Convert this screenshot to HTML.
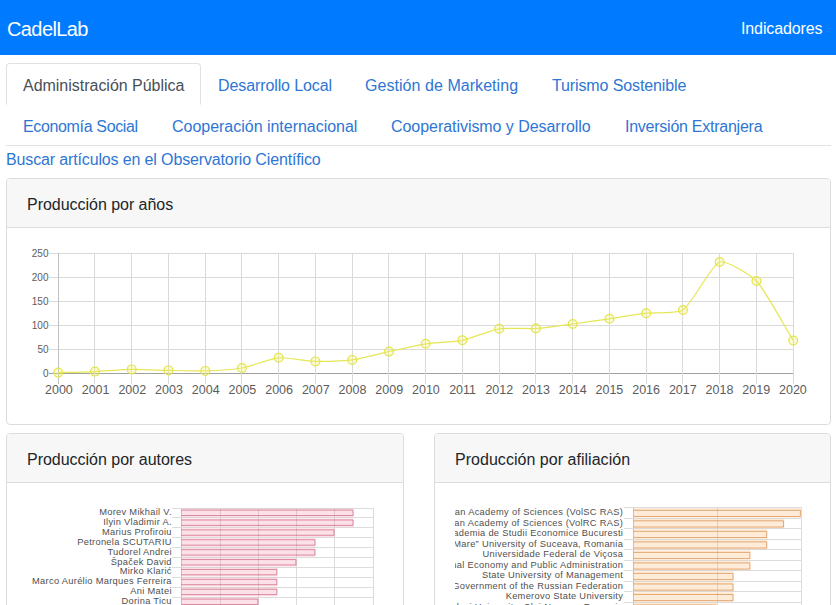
<!DOCTYPE html>
<html lang="es"><head><meta charset="utf-8"><title>CadelLab</title>
<style>
html,body{margin:0;padding:0;background:#fff;}
body{width:836px;height:605px;overflow:hidden;position:relative;font-family:"Liberation Sans", sans-serif;}
.card{position:absolute;border:1px solid #dcdcdc;border-radius:4px;background:#fff;box-sizing:border-box;overflow:hidden}
.card-header{position:absolute;left:0;top:0;right:0;height:48px;background:#f7f7f7;border-bottom:1px solid #dcdcdc}
</style></head><body>
<nav style="position:absolute;left:0;top:0;width:836px;height:55px;background:#007bff"></nav>
<a style="position:absolute;display:block;left:7px;top:15px;font-size:20px;line-height:28px;color:#fff;letter-spacing:-0.6px;white-space:nowrap;text-decoration:none;margin:0;font-weight:normal;">CadelLab</a>
<a style="position:absolute;display:block;left:741px;top:17px;font-size:16px;line-height:24px;color:#fff;letter-spacing:-0.12px;white-space:nowrap;text-decoration:none;margin:0;font-weight:normal;">Indicadores</a>
<div style="position:absolute;left:6px;top:63px;width:195px;height:42px;box-sizing:border-box;border:1px solid #dee2e6;border-bottom-color:#fff;border-radius:4px 4px 0 0"></div>
<div style="position:absolute;left:6px;top:145px;width:825px;height:1px;background:#dee2e6"></div>
<a style="position:absolute;display:block;left:23px;top:74px;font-size:16px;line-height:24px;color:#495057;letter-spacing:-0.02px;white-space:nowrap;text-decoration:none;margin:0;font-weight:normal;">Administración Pública</a>
<a style="position:absolute;display:block;left:218px;top:74px;font-size:16px;line-height:24px;color:#2e76d4;letter-spacing:-0.1px;white-space:nowrap;text-decoration:none;margin:0;font-weight:normal;">Desarrollo Local</a>
<a style="position:absolute;display:block;left:365px;top:74px;font-size:16px;line-height:24px;color:#2e76d4;letter-spacing:0.05px;white-space:nowrap;text-decoration:none;margin:0;font-weight:normal;">Gestión de Marketing</a>
<a style="position:absolute;display:block;left:552px;top:74px;font-size:16px;line-height:24px;color:#2e76d4;letter-spacing:-0.12px;white-space:nowrap;text-decoration:none;margin:0;font-weight:normal;">Turismo Sostenible</a>
<a style="position:absolute;display:block;left:23px;top:115px;font-size:16px;line-height:24px;color:#2e76d4;letter-spacing:-0.35px;white-space:nowrap;text-decoration:none;margin:0;font-weight:normal;">Economía Social</a>
<a style="position:absolute;display:block;left:172px;top:115px;font-size:16px;line-height:24px;color:#2e76d4;letter-spacing:-0.02px;white-space:nowrap;text-decoration:none;margin:0;font-weight:normal;">Cooperación internacional</a>
<a style="position:absolute;display:block;left:391px;top:115px;font-size:16px;line-height:24px;color:#2e76d4;letter-spacing:-0.05px;white-space:nowrap;text-decoration:none;margin:0;font-weight:normal;">Cooperativismo y Desarrollo</a>
<a style="position:absolute;display:block;left:625px;top:115px;font-size:16px;line-height:24px;color:#2e76d4;letter-spacing:-0.25px;white-space:nowrap;text-decoration:none;margin:0;font-weight:normal;">Inversión Extranjera</a>
<a style="position:absolute;display:block;left:6px;top:148px;font-size:16px;line-height:24px;color:#2e76d4;letter-spacing:-0.14px;white-space:nowrap;text-decoration:none;margin:0;font-weight:normal;">Buscar artículos en el Observatorio Científico</a>
<div class="card" style="left:6px;top:178px;width:825px;height:247px"><div class="card-header"></div></div>
<div class="card" style="left:6px;top:433px;width:398px;height:200px"><div class="card-header"></div></div>
<div class="card" style="left:434px;top:433px;width:397px;height:200px"><div class="card-header"></div></div>
<h5 style="position:absolute;display:block;left:27px;top:193px;font-size:16px;line-height:24px;color:#212529;letter-spacing:-0.03px;white-space:nowrap;text-decoration:none;margin:0;font-weight:normal;">Producción por años</h5>
<h5 style="position:absolute;display:block;left:27px;top:448px;font-size:16px;line-height:24px;color:#212529;letter-spacing:-0.02px;white-space:nowrap;text-decoration:none;margin:0;font-weight:normal;">Producción por autores</h5>
<h5 style="position:absolute;display:block;left:455px;top:448px;font-size:16px;line-height:24px;color:#212529;letter-spacing:0.03px;white-space:nowrap;text-decoration:none;margin:0;font-weight:normal;">Producción por afiliación</h5>
<svg width="836" height="605" style="position:absolute;left:0;top:0">
<line x1="49" y1="373.5" x2="794" y2="373.5" stroke="#a0a0a0" stroke-width="1"/>
<line x1="49" y1="349.5" x2="794" y2="349.5" stroke="#dadada" stroke-width="1"/>
<line x1="49" y1="325.5" x2="794" y2="325.5" stroke="#dadada" stroke-width="1"/>
<line x1="49" y1="301.5" x2="794" y2="301.5" stroke="#dadada" stroke-width="1"/>
<line x1="49" y1="277.5" x2="794" y2="277.5" stroke="#dadada" stroke-width="1"/>
<line x1="49" y1="253.5" x2="794" y2="253.5" stroke="#dadada" stroke-width="1"/>
<line x1="58.50" y1="253" x2="58.50" y2="384" stroke="#c0c0c0" stroke-width="1"/>
<line x1="94.50" y1="253" x2="94.50" y2="384" stroke="#dadada" stroke-width="1"/>
<line x1="131.50" y1="253" x2="131.50" y2="384" stroke="#dadada" stroke-width="1"/>
<line x1="168.50" y1="253" x2="168.50" y2="384" stroke="#dadada" stroke-width="1"/>
<line x1="205.50" y1="253" x2="205.50" y2="384" stroke="#dadada" stroke-width="1"/>
<line x1="241.50" y1="253" x2="241.50" y2="384" stroke="#dadada" stroke-width="1"/>
<line x1="278.50" y1="253" x2="278.50" y2="384" stroke="#dadada" stroke-width="1"/>
<line x1="315.50" y1="253" x2="315.50" y2="384" stroke="#dadada" stroke-width="1"/>
<line x1="352.50" y1="253" x2="352.50" y2="384" stroke="#dadada" stroke-width="1"/>
<line x1="388.50" y1="253" x2="388.50" y2="384" stroke="#dadada" stroke-width="1"/>
<line x1="425.50" y1="253" x2="425.50" y2="384" stroke="#dadada" stroke-width="1"/>
<line x1="462.50" y1="253" x2="462.50" y2="384" stroke="#dadada" stroke-width="1"/>
<line x1="499.50" y1="253" x2="499.50" y2="384" stroke="#dadada" stroke-width="1"/>
<line x1="535.50" y1="253" x2="535.50" y2="384" stroke="#dadada" stroke-width="1"/>
<line x1="572.50" y1="253" x2="572.50" y2="384" stroke="#dadada" stroke-width="1"/>
<line x1="609.50" y1="253" x2="609.50" y2="384" stroke="#dadada" stroke-width="1"/>
<line x1="646.50" y1="253" x2="646.50" y2="384" stroke="#dadada" stroke-width="1"/>
<line x1="682.50" y1="253" x2="682.50" y2="384" stroke="#dadada" stroke-width="1"/>
<line x1="719.50" y1="253" x2="719.50" y2="384" stroke="#dadada" stroke-width="1"/>
<line x1="756.50" y1="253" x2="756.50" y2="384" stroke="#dadada" stroke-width="1"/>
<line x1="793.50" y1="253" x2="793.50" y2="384" stroke="#dadada" stroke-width="1"/>
<path d="M58.20,372.60 C65.55,372.40 87.61,371.92 94.95,371.60 C102.31,371.28 124.34,369.52 131.70,369.40 C139.04,369.28 161.10,370.25 168.45,370.40 C175.80,370.55 197.86,371.14 205.20,370.90 C212.56,370.66 234.72,369.29 241.95,368.00 C249.42,366.67 271.23,358.47 278.70,357.80 C285.93,357.15 308.09,361.19 315.45,361.40 C322.79,361.61 344.94,360.87 352.20,359.90 C359.64,358.91 381.59,353.21 388.95,351.60 C396.29,349.99 418.29,344.94 425.70,343.80 C432.99,342.68 455.26,341.77 462.45,340.30 C469.96,338.77 491.68,330.01 499.20,328.80 C506.38,327.65 528.63,328.98 535.95,328.50 C543.33,328.02 565.36,324.97 572.70,324.00 C580.06,323.03 602.11,319.88 609.45,318.80 C616.81,317.72 638.82,314.08 646.20,313.20 C653.52,312.32 677.38,313.88 682.95,310.00 C692.08,303.64 710.97,265.44 719.70,262.00 C725.67,259.64 750.99,275.16 756.45,281.00 C765.69,290.86 785.85,328.60 793.20,340.50" fill="none" stroke="#e6e655" stroke-width="1.2"/>
<circle cx="58.20" cy="372.60" r="4.4" fill="rgba(240,240,120,0.3)" stroke="#e4e44c" stroke-width="1.2"/>
<circle cx="94.95" cy="371.60" r="4.4" fill="rgba(240,240,120,0.3)" stroke="#e4e44c" stroke-width="1.2"/>
<circle cx="131.70" cy="369.40" r="4.4" fill="rgba(240,240,120,0.3)" stroke="#e4e44c" stroke-width="1.2"/>
<circle cx="168.45" cy="370.40" r="4.4" fill="rgba(240,240,120,0.3)" stroke="#e4e44c" stroke-width="1.2"/>
<circle cx="205.20" cy="370.90" r="4.4" fill="rgba(240,240,120,0.3)" stroke="#e4e44c" stroke-width="1.2"/>
<circle cx="241.95" cy="368.00" r="4.4" fill="rgba(240,240,120,0.3)" stroke="#e4e44c" stroke-width="1.2"/>
<circle cx="278.70" cy="357.80" r="4.4" fill="rgba(240,240,120,0.3)" stroke="#e4e44c" stroke-width="1.2"/>
<circle cx="315.45" cy="361.40" r="4.4" fill="rgba(240,240,120,0.3)" stroke="#e4e44c" stroke-width="1.2"/>
<circle cx="352.20" cy="359.90" r="4.4" fill="rgba(240,240,120,0.3)" stroke="#e4e44c" stroke-width="1.2"/>
<circle cx="388.95" cy="351.60" r="4.4" fill="rgba(240,240,120,0.3)" stroke="#e4e44c" stroke-width="1.2"/>
<circle cx="425.70" cy="343.80" r="4.4" fill="rgba(240,240,120,0.3)" stroke="#e4e44c" stroke-width="1.2"/>
<circle cx="462.45" cy="340.30" r="4.4" fill="rgba(240,240,120,0.3)" stroke="#e4e44c" stroke-width="1.2"/>
<circle cx="499.20" cy="328.80" r="4.4" fill="rgba(240,240,120,0.3)" stroke="#e4e44c" stroke-width="1.2"/>
<circle cx="535.95" cy="328.50" r="4.4" fill="rgba(240,240,120,0.3)" stroke="#e4e44c" stroke-width="1.2"/>
<circle cx="572.70" cy="324.00" r="4.4" fill="rgba(240,240,120,0.3)" stroke="#e4e44c" stroke-width="1.2"/>
<circle cx="609.45" cy="318.80" r="4.4" fill="rgba(240,240,120,0.3)" stroke="#e4e44c" stroke-width="1.2"/>
<circle cx="646.20" cy="313.20" r="4.4" fill="rgba(240,240,120,0.3)" stroke="#e4e44c" stroke-width="1.2"/>
<circle cx="682.95" cy="310.00" r="4.4" fill="rgba(240,240,120,0.3)" stroke="#e4e44c" stroke-width="1.2"/>
<circle cx="719.70" cy="262.00" r="4.4" fill="rgba(240,240,120,0.3)" stroke="#e4e44c" stroke-width="1.2"/>
<circle cx="756.45" cy="281.00" r="4.4" fill="rgba(240,240,120,0.3)" stroke="#e4e44c" stroke-width="1.2"/>
<circle cx="793.20" cy="340.50" r="4.4" fill="rgba(240,240,120,0.3)" stroke="#e4e44c" stroke-width="1.2"/>
<text x="48.5" y="376.5" text-anchor="end" font-family="Liberation Sans" font-size="10" fill="#5c5c5c">0</text>
<text x="48.5" y="352.5" text-anchor="end" font-family="Liberation Sans" font-size="10" fill="#5c5c5c">50</text>
<text x="48.5" y="328.5" text-anchor="end" font-family="Liberation Sans" font-size="10" fill="#5c5c5c">100</text>
<text x="48.5" y="304.5" text-anchor="end" font-family="Liberation Sans" font-size="10" fill="#5c5c5c">150</text>
<text x="48.5" y="280.5" text-anchor="end" font-family="Liberation Sans" font-size="10" fill="#5c5c5c">200</text>
<text x="48.5" y="256.5" text-anchor="end" font-family="Liberation Sans" font-size="10" fill="#5c5c5c">250</text>
<text x="58.90" y="394.2" text-anchor="middle" font-family="Liberation Sans" font-size="12.5" fill="#5c5c5c">2000</text>
<text x="95.60" y="394.2" text-anchor="middle" font-family="Liberation Sans" font-size="12.5" fill="#5c5c5c">2001</text>
<text x="132.30" y="394.2" text-anchor="middle" font-family="Liberation Sans" font-size="12.5" fill="#5c5c5c">2002</text>
<text x="169.00" y="394.2" text-anchor="middle" font-family="Liberation Sans" font-size="12.5" fill="#5c5c5c">2003</text>
<text x="205.70" y="394.2" text-anchor="middle" font-family="Liberation Sans" font-size="12.5" fill="#5c5c5c">2004</text>
<text x="242.40" y="394.2" text-anchor="middle" font-family="Liberation Sans" font-size="12.5" fill="#5c5c5c">2005</text>
<text x="279.10" y="394.2" text-anchor="middle" font-family="Liberation Sans" font-size="12.5" fill="#5c5c5c">2006</text>
<text x="315.80" y="394.2" text-anchor="middle" font-family="Liberation Sans" font-size="12.5" fill="#5c5c5c">2007</text>
<text x="352.50" y="394.2" text-anchor="middle" font-family="Liberation Sans" font-size="12.5" fill="#5c5c5c">2008</text>
<text x="389.20" y="394.2" text-anchor="middle" font-family="Liberation Sans" font-size="12.5" fill="#5c5c5c">2009</text>
<text x="425.90" y="394.2" text-anchor="middle" font-family="Liberation Sans" font-size="12.5" fill="#5c5c5c">2010</text>
<text x="462.60" y="394.2" text-anchor="middle" font-family="Liberation Sans" font-size="12.5" fill="#5c5c5c">2011</text>
<text x="499.30" y="394.2" text-anchor="middle" font-family="Liberation Sans" font-size="12.5" fill="#5c5c5c">2012</text>
<text x="536.00" y="394.2" text-anchor="middle" font-family="Liberation Sans" font-size="12.5" fill="#5c5c5c">2013</text>
<text x="572.70" y="394.2" text-anchor="middle" font-family="Liberation Sans" font-size="12.5" fill="#5c5c5c">2014</text>
<text x="609.40" y="394.2" text-anchor="middle" font-family="Liberation Sans" font-size="12.5" fill="#5c5c5c">2015</text>
<text x="646.10" y="394.2" text-anchor="middle" font-family="Liberation Sans" font-size="12.5" fill="#5c5c5c">2016</text>
<text x="682.80" y="394.2" text-anchor="middle" font-family="Liberation Sans" font-size="12.5" fill="#5c5c5c">2017</text>
<text x="719.50" y="394.2" text-anchor="middle" font-family="Liberation Sans" font-size="12.5" fill="#5c5c5c">2018</text>
<text x="756.20" y="394.2" text-anchor="middle" font-family="Liberation Sans" font-size="12.5" fill="#5c5c5c">2019</text>
<text x="792.90" y="394.2" text-anchor="middle" font-family="Liberation Sans" font-size="12.5" fill="#5c5c5c">2020</text>
</svg>
<svg width="836" height="605" style="position:absolute;left:0;top:0"><line x1="181.5" y1="508.0" x2="181.5" y2="616.9" stroke="#c4c4c4" stroke-width="1"/>
<line x1="220.5" y1="508.0" x2="220.5" y2="616.9" stroke="#dcdcdc" stroke-width="1"/>
<line x1="258.5" y1="508.0" x2="258.5" y2="616.9" stroke="#dcdcdc" stroke-width="1"/>
<line x1="296.5" y1="508.0" x2="296.5" y2="616.9" stroke="#dcdcdc" stroke-width="1"/>
<line x1="334.5" y1="508.0" x2="334.5" y2="616.9" stroke="#dcdcdc" stroke-width="1"/>
<line x1="373.5" y1="508.0" x2="373.5" y2="616.9" stroke="#dcdcdc" stroke-width="1"/>
<line x1="172" y1="508.5" x2="373.5" y2="508.5" stroke="#dcdcdc" stroke-width="1"/>
<line x1="172" y1="517.5" x2="373.5" y2="517.5" stroke="#dcdcdc" stroke-width="1"/>
<line x1="172" y1="527.5" x2="373.5" y2="527.5" stroke="#dcdcdc" stroke-width="1"/>
<line x1="172" y1="537.5" x2="373.5" y2="537.5" stroke="#dcdcdc" stroke-width="1"/>
<line x1="172" y1="547.5" x2="373.5" y2="547.5" stroke="#dcdcdc" stroke-width="1"/>
<line x1="172" y1="557.5" x2="373.5" y2="557.5" stroke="#dcdcdc" stroke-width="1"/>
<line x1="172" y1="567.5" x2="373.5" y2="567.5" stroke="#dcdcdc" stroke-width="1"/>
<line x1="172" y1="577.5" x2="373.5" y2="577.5" stroke="#dcdcdc" stroke-width="1"/>
<line x1="172" y1="587.5" x2="373.5" y2="587.5" stroke="#dcdcdc" stroke-width="1"/>
<line x1="172" y1="597.5" x2="373.5" y2="597.5" stroke="#dcdcdc" stroke-width="1"/>
<line x1="172" y1="606.5" x2="373.5" y2="606.5" stroke="#dcdcdc" stroke-width="1"/>
<rect x="181.5" y="508.40" width="172.15" height="8.80" fill="rgba(247,120,150,0.22)"/>
<path d="M181.5,510.10 H353.05 V515.50 H181.5" fill="none" stroke="rgba(200,80,115,0.62)" stroke-width="1.0"/>
<text x="171.8" y="515.15" text-anchor="end" font-family="Liberation Sans" font-size="9.3" letter-spacing="0.3" fill="#505050">Morev Mikhail V.</text>
<rect x="181.5" y="518.29" width="172.15" height="8.80" fill="rgba(247,120,150,0.22)"/>
<path d="M181.5,519.99 H353.05 V525.39 H181.5" fill="none" stroke="rgba(200,80,115,0.62)" stroke-width="1.0"/>
<text x="171.8" y="525.04" text-anchor="end" font-family="Liberation Sans" font-size="9.3" letter-spacing="0.3" fill="#505050">Ilyin Vladimir A.</text>
<rect x="181.5" y="528.18" width="153.10" height="8.80" fill="rgba(247,120,150,0.22)"/>
<path d="M181.5,529.88 H334.00 V535.28 H181.5" fill="none" stroke="rgba(200,80,115,0.62)" stroke-width="1.0"/>
<text x="171.8" y="534.93" text-anchor="end" font-family="Liberation Sans" font-size="9.3" letter-spacing="0.3" fill="#505050">Marius Profiroiu</text>
<rect x="181.5" y="538.07" width="134.05" height="8.80" fill="rgba(247,120,150,0.22)"/>
<path d="M181.5,539.77 H314.95 V545.17 H181.5" fill="none" stroke="rgba(200,80,115,0.62)" stroke-width="1.0"/>
<text x="171.8" y="544.82" text-anchor="end" font-family="Liberation Sans" font-size="9.3" letter-spacing="0.3" fill="#505050">Petronela SCUTARIU</text>
<rect x="181.5" y="547.96" width="134.05" height="8.80" fill="rgba(247,120,150,0.22)"/>
<path d="M181.5,549.66 H314.95 V555.06 H181.5" fill="none" stroke="rgba(200,80,115,0.62)" stroke-width="1.0"/>
<text x="171.8" y="554.71" text-anchor="end" font-family="Liberation Sans" font-size="9.3" letter-spacing="0.3" fill="#505050">Tudorel Andrei</text>
<rect x="181.5" y="557.85" width="115.00" height="8.80" fill="rgba(247,120,150,0.22)"/>
<path d="M181.5,559.55 H295.90 V564.95 H181.5" fill="none" stroke="rgba(200,80,115,0.62)" stroke-width="1.0"/>
<text x="171.8" y="564.60" text-anchor="end" font-family="Liberation Sans" font-size="9.3" letter-spacing="0.3" fill="#505050">Špaček David</text>
<rect x="181.5" y="567.74" width="95.95" height="8.80" fill="rgba(247,120,150,0.22)"/>
<path d="M181.5,569.44 H276.85 V574.84 H181.5" fill="none" stroke="rgba(200,80,115,0.62)" stroke-width="1.0"/>
<text x="171.8" y="574.49" text-anchor="end" font-family="Liberation Sans" font-size="9.3" letter-spacing="0.3" fill="#505050">Mirko Klarić</text>
<rect x="181.5" y="577.63" width="95.95" height="8.80" fill="rgba(247,120,150,0.22)"/>
<path d="M181.5,579.33 H276.85 V584.73 H181.5" fill="none" stroke="rgba(200,80,115,0.62)" stroke-width="1.0"/>
<text x="171.8" y="584.38" text-anchor="end" font-family="Liberation Sans" font-size="9.3" letter-spacing="0.3" fill="#505050">Marco Aurélio Marques Ferreira</text>
<rect x="181.5" y="587.52" width="95.95" height="8.80" fill="rgba(247,120,150,0.22)"/>
<path d="M181.5,589.22 H276.85 V594.62 H181.5" fill="none" stroke="rgba(200,80,115,0.62)" stroke-width="1.0"/>
<text x="171.8" y="594.27" text-anchor="end" font-family="Liberation Sans" font-size="9.3" letter-spacing="0.3" fill="#505050">Ani Matei</text>
<rect x="181.5" y="597.41" width="76.90" height="8.80" fill="rgba(247,120,150,0.22)"/>
<path d="M181.5,599.11 H257.80 V604.51 H181.5" fill="none" stroke="rgba(200,80,115,0.62)" stroke-width="1.0"/>
<text x="171.8" y="604.16" text-anchor="end" font-family="Liberation Sans" font-size="9.3" letter-spacing="0.3" fill="#505050">Dorina Ticu</text></svg>
<svg width="836" height="605" style="position:absolute;left:0;top:0"><defs><clipPath id="c3"><rect x="455" y="480" width="380" height="130"/></clipPath></defs><g clip-path="url(#c3)"><line x1="633.5" y1="507.6" x2="633.5" y2="622.8" stroke="#c4c4c4" stroke-width="1"/>
<line x1="717.5" y1="507.6" x2="717.5" y2="622.8" stroke="#dcdcdc" stroke-width="1"/>
<line x1="801.5" y1="507.6" x2="801.5" y2="622.8" stroke="#dcdcdc" stroke-width="1"/>
<line x1="624" y1="507.5" x2="801.5" y2="507.5" stroke="#dcdcdc" stroke-width="1"/>
<line x1="624" y1="518.5" x2="801.5" y2="518.5" stroke="#dcdcdc" stroke-width="1"/>
<line x1="624" y1="528.5" x2="801.5" y2="528.5" stroke="#dcdcdc" stroke-width="1"/>
<line x1="624" y1="539.5" x2="801.5" y2="539.5" stroke="#dcdcdc" stroke-width="1"/>
<line x1="624" y1="549.5" x2="801.5" y2="549.5" stroke="#dcdcdc" stroke-width="1"/>
<line x1="624" y1="560.5" x2="801.5" y2="560.5" stroke="#dcdcdc" stroke-width="1"/>
<line x1="624" y1="570.5" x2="801.5" y2="570.5" stroke="#dcdcdc" stroke-width="1"/>
<line x1="624" y1="581.5" x2="801.5" y2="581.5" stroke="#dcdcdc" stroke-width="1"/>
<line x1="624" y1="591.5" x2="801.5" y2="591.5" stroke="#dcdcdc" stroke-width="1"/>
<line x1="624" y1="602.5" x2="801.5" y2="602.5" stroke="#dcdcdc" stroke-width="1"/>
<line x1="624" y1="612.5" x2="801.5" y2="612.5" stroke="#dcdcdc" stroke-width="1"/>
<rect x="633.5" y="508.10" width="167.50" height="9.50" fill="rgba(250,170,90,0.24)"/>
<path d="M633.5,510.30 H800.40 V516.50 H633.5" fill="none" stroke="rgba(215,140,70,0.7)" stroke-width="1.0"/>
<text x="623.2" y="515.06" text-anchor="end" font-family="Liberation Sans" font-size="9.3" letter-spacing="0.3" fill="#505050">Vologda Research Center of the Russian Academy of Sciences (VolSC RAS)</text>
<rect x="633.5" y="518.62" width="150.66" height="9.50" fill="rgba(250,170,90,0.24)"/>
<path d="M633.5,520.82 H783.56 V527.02 H633.5" fill="none" stroke="rgba(215,140,70,0.7)" stroke-width="1.0"/>
<text x="623.2" y="525.58" text-anchor="end" font-family="Liberation Sans" font-size="9.3" letter-spacing="0.3" fill="#505050">Vologda Research Center of the Russian Academy of Sciences (VolRC RAS)</text>
<rect x="633.5" y="529.14" width="133.82" height="9.50" fill="rgba(250,170,90,0.24)"/>
<path d="M633.5,531.34 H766.72 V537.54 H633.5" fill="none" stroke="rgba(215,140,70,0.7)" stroke-width="1.0"/>
<text x="623.2" y="536.10" text-anchor="end" font-family="Liberation Sans" font-size="9.3" letter-spacing="0.3" fill="#505050">Academia de Studii Economice Bucuresti</text>
<rect x="633.5" y="539.66" width="133.82" height="9.50" fill="rgba(250,170,90,0.24)"/>
<path d="M633.5,541.86 H766.72 V548.06 H633.5" fill="none" stroke="rgba(215,140,70,0.7)" stroke-width="1.0"/>
<text x="623.2" y="546.62" text-anchor="end" font-family="Liberation Sans" font-size="9.3" letter-spacing="0.3" fill="#505050">“Stefan cel Mare” University of Suceava, Romania</text>
<rect x="633.5" y="550.18" width="116.98" height="9.50" fill="rgba(250,170,90,0.24)"/>
<path d="M633.5,552.38 H749.88 V558.58 H633.5" fill="none" stroke="rgba(215,140,70,0.7)" stroke-width="1.0"/>
<text x="623.2" y="557.14" text-anchor="end" font-family="Liberation Sans" font-size="9.3" letter-spacing="0.3" fill="#505050">Universidade Federal de Viçosa</text>
<rect x="633.5" y="560.70" width="116.98" height="9.50" fill="rgba(250,170,90,0.24)"/>
<path d="M633.5,562.90 H749.88 V569.10 H633.5" fill="none" stroke="rgba(215,140,70,0.7)" stroke-width="1.0"/>
<text x="623.2" y="567.66" text-anchor="end" font-family="Liberation Sans" font-size="9.3" letter-spacing="0.3" fill="#505050">Russian Presidential Academy of National Economy and Public Administration</text>
<rect x="633.5" y="571.22" width="100.14" height="9.50" fill="rgba(250,170,90,0.24)"/>
<path d="M633.5,573.42 H733.04 V579.62 H633.5" fill="none" stroke="rgba(215,140,70,0.7)" stroke-width="1.0"/>
<text x="623.2" y="578.18" text-anchor="end" font-family="Liberation Sans" font-size="9.3" letter-spacing="0.3" fill="#505050">State University of Management</text>
<rect x="633.5" y="581.74" width="100.14" height="9.50" fill="rgba(250,170,90,0.24)"/>
<path d="M633.5,583.94 H733.04 V590.14 H633.5" fill="none" stroke="rgba(215,140,70,0.7)" stroke-width="1.0"/>
<text x="623.2" y="588.70" text-anchor="end" font-family="Liberation Sans" font-size="9.3" letter-spacing="0.3" fill="#505050">Financial University under the Government of the Russian Federation</text>
<rect x="633.5" y="592.26" width="100.14" height="9.50" fill="rgba(250,170,90,0.24)"/>
<path d="M633.5,594.46 H733.04 V600.66 H633.5" fill="none" stroke="rgba(215,140,70,0.7)" stroke-width="1.0"/>
<text x="623.2" y="599.22" text-anchor="end" font-family="Liberation Sans" font-size="9.3" letter-spacing="0.3" fill="#505050">Kemerovo State University</text>
<rect x="633.5" y="602.78" width="83.30" height="9.50" fill="rgba(250,170,90,0.24)"/>
<path d="M633.5,604.98 H716.20 V611.18 H633.5" fill="none" stroke="rgba(215,140,70,0.7)" stroke-width="1.0"/>
<text x="623.2" y="609.74" text-anchor="end" font-family="Liberation Sans" font-size="9.3" letter-spacing="0.3" fill="#505050">Babeş-Bolyai University, Cluj-Napoca, Romania</text></g></svg>
</body></html>
